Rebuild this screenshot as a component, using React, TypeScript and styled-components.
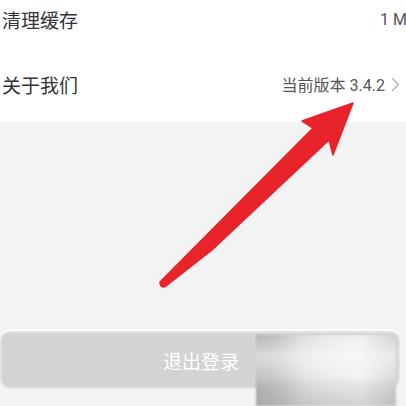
import React from 'react';
import styled, { createGlobalStyle } from 'styled-components';

const GlobalStyle = createGlobalStyle`
  html, body {
    margin: 0;
    padding: 0;
    background: #f3f3f3;
    overflow: hidden;
  }
  * { box-sizing: border-box; }
`;

const Page = styled.div`
  position: relative;
  width: 406px;
  height: 406px;
  overflow: hidden;
  background: #f3f3f3;
  display: flex;
  flex-direction: column;
  font-family: "Roboto", "Noto Sans CJK SC", sans-serif;
`;

const SettingsList = styled.div`
  background: #ffffff;
  height: 122px;
  display: flex;
  flex-direction: column;
`;

const Row = styled.div<{ $height: number; $offset?: number }>`
  height: ${p => p.$height}px;
  padding: ${p => p.$offset || 0}px 6px 0 2px;
  display: flex;
  align-items: center;
  justify-content: space-between;
`;

const Label = styled.span`
  font-family: "Noto Sans CJK SC", sans-serif;
  font-size: 19px;
  color: #333333;
`;

const Value = styled.span<{ $bleed?: number }>`
  display: flex;
  align-items: center;
  gap: 6px;
  font-size: 16px;
  color: #555555;
  white-space: nowrap;
  margin-right: ${p => (p.$bleed ? -p.$bleed : 0)}px;
`;

const Chevron = () => (
  <svg width="9" height="15" viewBox="0 0 9 15" fill="none">
    <path d="M1.5 1.5 L7.5 7.5 L1.5 13.5" stroke="#b4b4b4" strokeWidth="1.4" strokeLinejoin="round" strokeLinecap="round" />
  </svg>
);

const Gap = styled.div`
  height: 209px;
`;

const LogoutButton = styled.button`
  width: 400px;
  height: 58px;
  margin: 0;
  border: 2px solid #e2e2e2;
  border-radius: 10px;
  box-shadow: 0 -2px 0 #fbfbfb;
  background: #d3d3d3;
  color: #ffffff;
  font-family: "Noto Sans CJK SC", sans-serif;
  font-size: 19px;
  display: flex;
  align-items: center;
  justify-content: center;
  padding: 0 0 0 2px;
`;

const Watermark = styled.div`
  position: absolute;
  left: 256px;
  top: 335px;
  width: 140px;
  height: 71px;
  background:
    linear-gradient(180deg, rgba(255,255,255,0) 0%, rgba(255,255,255,0.5) 30%, rgba(255,255,255,0.25) 55%, rgba(150,150,150,0.15) 75%, rgba(140,140,140,0.3) 100%),
    linear-gradient(90deg, #b3b3b3 0%, #bdbdbd 12%, #cacaca 22%, #dcdcdc 32%, #e6e6e6 45%, #ececec 60%, #f0f0f0 75%, #dedede 90%, #d2d2d2 100%);
  filter: blur(1.2px);
`;

const ArrowLayer = styled.svg`
  position: absolute;
  left: 0;
  top: 0;
  pointer-events: none;
`;

export default function App() {
  return (
    <>
      <GlobalStyle />
      <Page>
        <SettingsList>
          <Row $height={38}>
            <Label>清理缓存</Label>
            <Value $bleed={7}>1 M</Value>
          </Row>
          <Row $height={84} $offset={8}>
            <Label>关于我们</Label>
            <Value>
              当前版本 3.4.2
              <Chevron />
            </Value>
          </Row>
        </SettingsList>
        <Gap />
        <LogoutButton>退出登录</LogoutButton>
        <Watermark />
        <ArrowLayer width="406" height="406" viewBox="0 0 406 406">
          <path
            d="M160 282 L313 128 L302 121 L353 103 L333 155 L329 140 L212 250 L166 286 Q160 289 160 282 Z"
            fill="#e8232a"
            stroke="#e8232a"
            strokeWidth="1.5"
            strokeLinejoin="round"
          />
        </ArrowLayer>
      </Page>
    </>
  );
}
